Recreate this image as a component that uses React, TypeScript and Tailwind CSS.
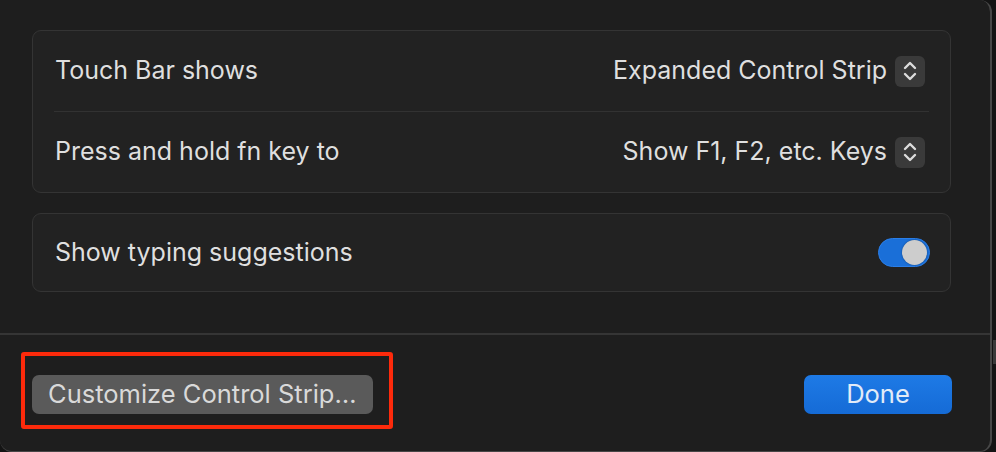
import React from 'react';

const font = { fontFamily: 'Inter, "Noto Sans", sans-serif' };

const Stepper: React.FC = () => (
  <span className="flex h-[31px] w-[30px] items-center justify-center rounded-[6px] bg-[#3a3a3a]">
    <svg width="16" height="24" viewBox="0 0 16 24" fill="none" stroke="#dcdcdc" strokeWidth="2.4" strokeLinecap="round" strokeLinejoin="round">
      <path d="M3 9 L8 4 L13 9" />
      <path d="M3 15 L8 20 L13 15" />
    </svg>
  </span>
);

const PopupRow: React.FC<{ label: string; value: string }> = ({ label, value }) => (
  <div className="flex h-[80px] items-center justify-between pl-[22px] pr-[25px]">
    <span className="text-[25px] text-[#dfdfdf]">{label}</span>
    <div className="flex items-center gap-[8px]">
      <span className="text-[25px] text-[#dfdfdf]">{value}</span>
      <Stepper />
    </div>
  </div>
);

const Toggle: React.FC = () => (
  <span className="flex h-[29px] w-[52px] items-center justify-end rounded-full border border-[#2a7ee8] bg-[#1a6fd8] pr-[2px]">
    <span className="h-[25px] w-[25px] rounded-full bg-[#cdcdcd] shadow-[0_0_2px_rgba(0,0,0,0.4)]" />
  </span>
);

export default function App() {
  return (
    <div className="flex h-[452px] w-[996px] bg-[#141414]" style={font}>
      <div className="relative flex h-full w-[992px] flex-col rounded-tr-[12px] rounded-b-[12px] border-r-2 border-b border-[#474747] bg-[#1e1e1e]">
        <div className="flex flex-col gap-[20px] pl-[32px] pr-[39px] pt-[30px]">
          <div className="rounded-[9px] border border-[#343434] bg-[#222222]">
            <PopupRow label="Touch Bar shows" value="Expanded Control Strip" />
            <div className="mx-[21px] h-px bg-[#323232]" />
            <PopupRow label="Press and hold fn key to" value="Show F1, F2, etc. Keys" />
          </div>
          <div className="flex h-[79px] items-center justify-between rounded-[9px] border border-[#343434] bg-[#222222] pl-[22px] pr-[20px]">
            <span className="text-[25px] text-[#dfdfdf]">Show typing suggestions</span>
            <Toggle />
          </div>
        </div>

        <div className="mt-[41px] h-[2px] bg-[#353535]" />

        <div className="flex items-center justify-between pl-[32px] pr-[38px] pt-[40px]">
          <button className="h-[39px] w-[341px] rounded-[7px] bg-[#5a5a5a] pl-[16px] text-left text-[25.5px] text-[#d9d9d9]">
            Customize Control Strip…
          </button>
          <button className="h-[39px] w-[148px] rounded-[7px] bg-gradient-to-b from-[#1e7ae6] to-[#156bd6] text-[25.5px] text-[#e2ebf8]">
            Done
          </button>
        </div>

        <div className="pointer-events-none absolute left-[21px] top-[352px] h-[77px] w-[372px] rounded-[3px] border-[4px] border-[#fd2a0b]" />
      </div>
      <div className="flex flex-1 flex-col pt-[340px]">
        <div className="ml-[1px] h-[24px] w-[3px] bg-[#3a3a3a]" />
      </div>
    </div>
  );
}
